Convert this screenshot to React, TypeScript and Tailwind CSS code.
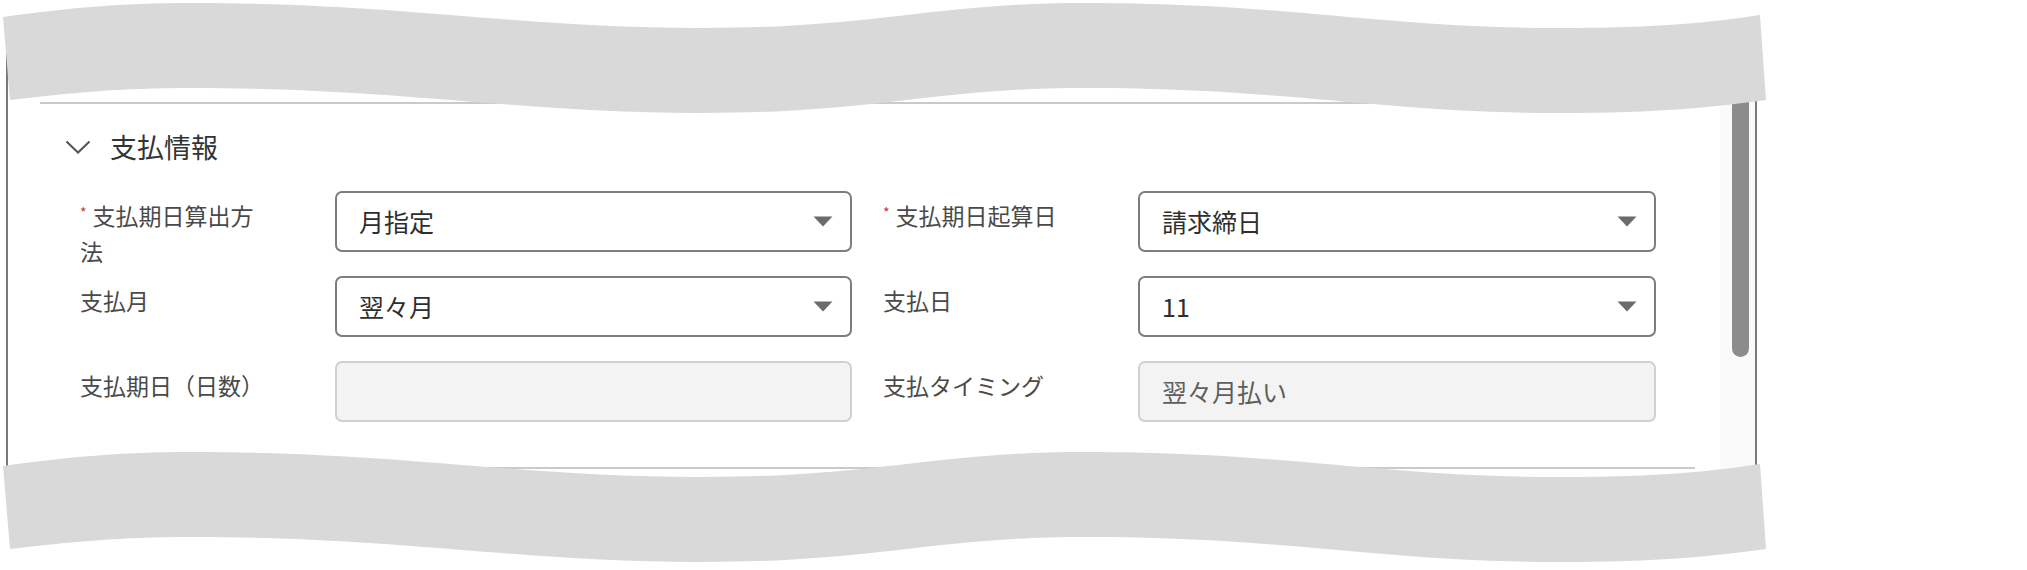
import React from 'react';

type Field = {
  label: string;
  value: string;
  required?: boolean;
  readOnly?: boolean;
};

const rows: [Field, Field][] = [
  [
    { label: '支払期日算出方法', value: '月指定', required: true },
    { label: '支払期日起算日', value: '請求締日', required: true },
  ],
  [
    { label: '支払月', value: '翌々月' },
    { label: '支払日', value: '11' },
  ],
  [
    { label: '支払期日（日数）', value: '', readOnly: true },
    { label: '支払タイミング', value: '翌々月払い', readOnly: true },
  ],
];

// torn-edge band, shifted down by dy
function wavePath(dy: number) {
  const p = (x: number, y: number) => `${x},${y + dy}`;
  return [
    `M${p(3, 17)}`,
    `C${p(70, 8)} ${p(120, 3)} ${p(191, 3)}`,
    `C${p(400, 3)} ${p(520, 28)} ${p(700, 28)}`,
    `C${p(880, 28)} ${p(930, 3)} ${p(1085, 3)}`,
    `C${p(1290, 3)} ${p(1380, 28)} ${p(1557, 28)}`,
    `C${p(1660, 28)} ${p(1715, 22)} ${p(1760, 15)}`,
    `L${p(1766, 100)}`,
    `C${p(1715, 107)} ${p(1660, 113)} ${p(1557, 113)}`,
    `C${p(1380, 113)} ${p(1290, 88)} ${p(1085, 88)}`,
    `C${p(930, 88)} ${p(880, 113)} ${p(700, 113)}`,
    `C${p(520, 113)} ${p(400, 88)} ${p(191, 88)}`,
    `C${p(120, 88)} ${p(70, 93)} ${p(10, 100)}`,
    'Z',
  ].join(' ');
}

function Caret() {
  return (
    <svg width="20" height="11" viewBox="0 0 20 11" className="shrink-0">
      <path d="M0.5 0.5 H19.5 L10 10.5 Z" fill="#6b6b6b" />
    </svg>
  );
}

function FieldCell({ field }: { field: Field }) {
  return (
    <div className="flex h-[61px] items-start">
      <div className="w-[255px] shrink-0 pr-[65px] pt-[8px] text-[23px] leading-[32px] text-[#4a4a4a]">
        {field.required && (
          <span className="relative -top-[7px] mr-[6px] text-[14px] text-[#c23934]">*</span>
        )}
        {field.label}
      </div>
      {field.readOnly ? (
        <div className="flex h-[61px] flex-1 items-center rounded-[7px] border-2 border-[#d0d0d0] bg-[#f3f3f3] pl-[22px] text-[25px] text-[#5e5e5e]">
          {field.value}
        </div>
      ) : (
        <div className="flex h-[61px] flex-1 items-center justify-between rounded-[7px] border-2 border-[#7d7d7d] bg-white pl-[22px] pr-[17px] text-[25px] text-[#2e2e2e]">
          <span>{field.value}</span>
          <Caret />
        </div>
      )}
    </div>
  );
}

export default function App() {
  return (
    <div className="relative h-[570px] w-[2027px] overflow-hidden bg-white font-['Noto_Sans_CJK_JP','Noto_Sans',sans-serif]">
      {/* Panel */}
      <div className="ml-[6px] mt-[40px] flex h-[460px] w-[1751px] border-x-2 border-[#7a7a7a]">
        <div className="flex-1 pl-[32px] pr-[25px] pt-[62px]">
          <div className="h-[2px] bg-[#cacaca]" />

          {/* Section header */}
          <div className="ml-[25px] mt-[23px] flex h-[40px] items-center">
            <svg width="26" height="14" viewBox="0 0 26 14" className="shrink-0">
              <path d="M1.5 1.5 L13 12.5 L24.5 1.5" fill="none" stroke="#555" strokeWidth="2" />
            </svg>
            <h2 className="ml-[19px] text-[27px] leading-[40px] font-normal text-[#333]">支払情報</h2>
          </div>

          {/* Fields */}
          <div className="ml-[40px] mt-[24px] grid auto-rows-[61px] grid-cols-[772px_773px] gap-x-[31px] gap-y-[24px]">
            {rows.map(([left, right], i) => (
              <React.Fragment key={i}>
                <FieldCell field={left} />
                <FieldCell field={right} />
              </React.Fragment>
            ))}
          </div>

          <div className="mt-[45px] h-[2px] bg-[#cacaca]" />
        </div>

        {/* Scrollbar */}
        <div className="w-[35px] shrink-0 bg-[#fafafa]">
          <div className="ml-[12px] h-[317px] w-[17px] rounded-full bg-[#8c8c8c]" />
        </div>
      </div>

      {/* Torn-edge overlays */}
      <svg
        className="pointer-events-none absolute left-0 top-0"
        width="2027"
        height="570"
        viewBox="0 0 2027 570"
      >
        <path d={wavePath(0)} fill="#d9d9d9" />
        <path d={wavePath(449)} fill="#d9d9d9" />
      </svg>
    </div>
  );
}
